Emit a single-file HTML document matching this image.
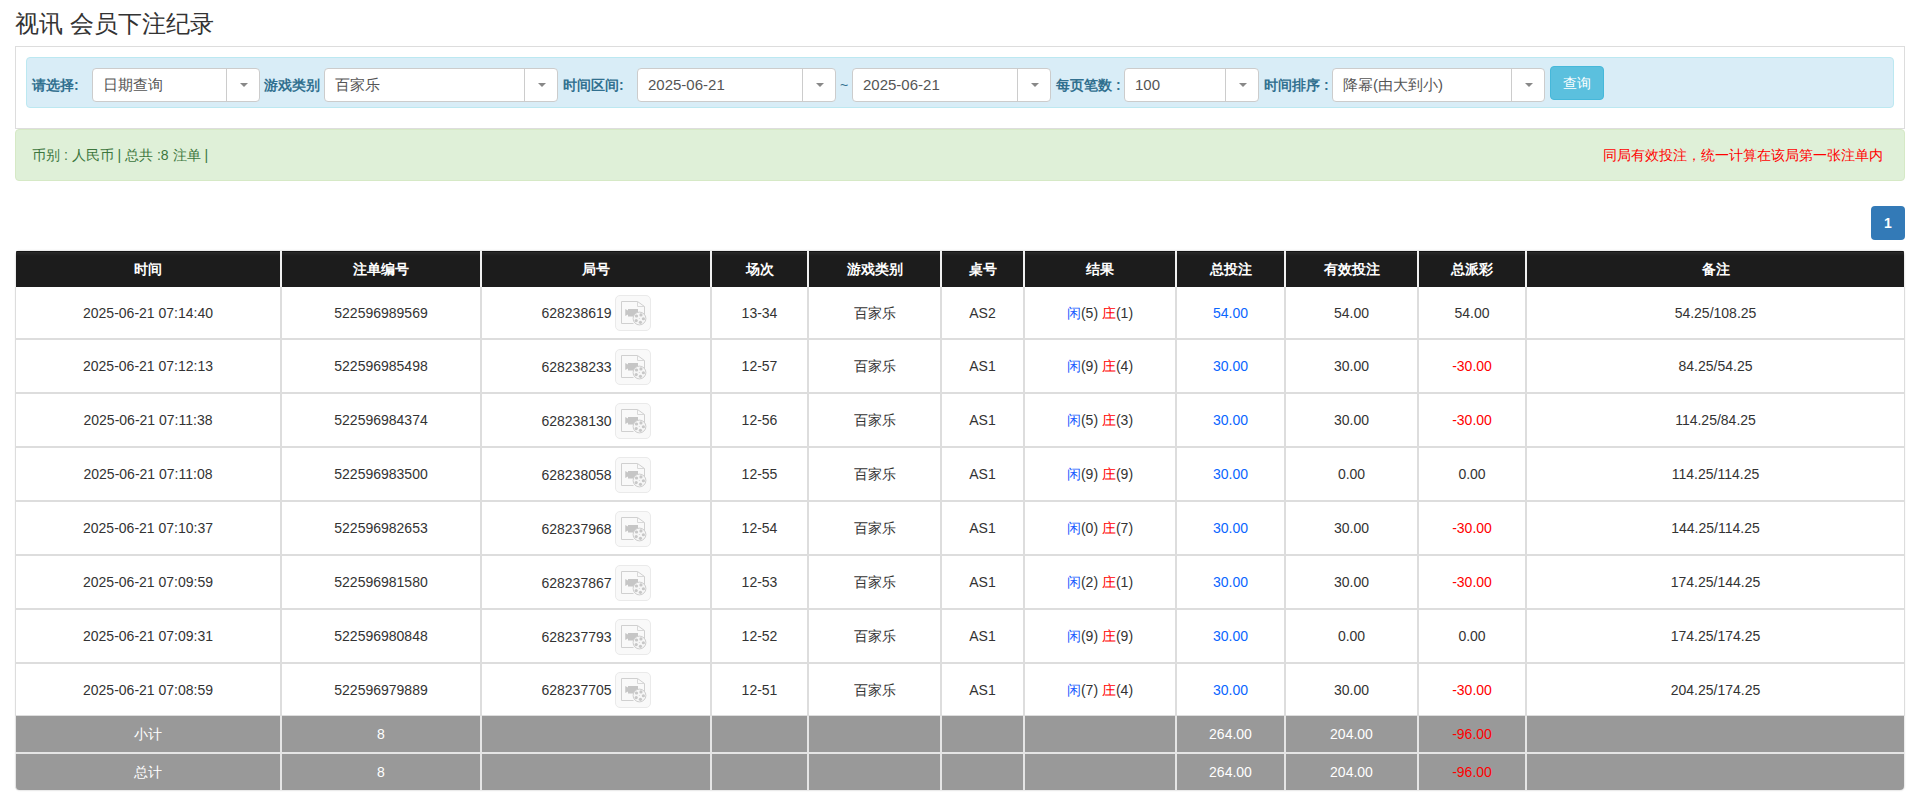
<!DOCTYPE html>
<html><head><meta charset="utf-8"><title>视讯 会员下注纪录</title>
<style>
*{box-sizing:border-box;margin:0;padding:0}
html,body{width:1915px;height:803px;overflow:hidden;background:#fff}
body{font-family:"Liberation Sans",sans-serif;font-size:14px;color:#333;position:relative}
.a{position:absolute}
.title{left:15px;top:7px;font-size:24px;line-height:34px;color:#333;white-space:nowrap}
.panel{left:15px;top:46px;width:1890px;height:83px;border:1px solid #ddd}
.bar{left:26px;top:57px;width:1868px;height:51px;background:#d9edf7;border:1px solid #bce8f1;border-radius:4px}
.lbl{position:absolute;top:76px;font-size:14px;font-weight:bold;color:#31708f;line-height:18px;white-space:nowrap}
.sel{position:absolute;top:68px;height:34px;background:#fff;border:1px solid #ccc;border-radius:4px}
.sel .tx{position:absolute;left:10px;top:0;line-height:32px;font-size:15px;color:#555;white-space:nowrap}
.sel .ar{position:absolute;right:0;top:0;width:33px;height:32px;border-left:1px solid #ccc}
.sel .ar:after{content:"";position:absolute;left:13px;top:14px;border-left:4px solid transparent;border-right:4px solid transparent;border-top:4px solid #888}
.btn{left:1550px;top:66px;width:54px;height:34px;background:#5bc0de;border:1px solid #46b8da;border-radius:4px;color:#fff;font-size:14px;line-height:32px;text-align:center}
.alert{left:15px;top:129px;width:1890px;height:52px;background:#dff0d8;border:1px solid #d6e9c6;border-radius:4px}
.al{position:absolute;left:16px;top:16px;color:#3c763d;font-size:14px;line-height:18px;white-space:nowrap}
.ar2{position:absolute;right:21px;top:16px;color:#f00;font-size:14px;line-height:18px;white-space:nowrap}
.pg{left:1871px;top:206px;width:34px;height:34px;background:#337ab7;border-radius:4px;color:#fff;font-size:14px;font-weight:bold;line-height:34px;text-align:center}
.c{position:absolute;display:flex;align-items:center;justify-content:center;white-space:nowrap;line-height:16px}
.h{background:linear-gradient(#141414 0,#141414 1px,#2a2a2a 1px,#222 3px,#1c1c1c 5px);color:#fff;font-weight:bold;border-left:1px solid #f0f0f0;border-right:1px solid #f0f0f0}
.b{background:#fff;border:1px solid #ddd}
.b.first{border-top:none}
.g{background:#999;color:#fff;border-left:1px solid #e5e5e5;border-right:1px solid #e5e5e5}
.bl{color:#1b5cff}
.rd{color:#f00}
.bn{color:#0a66ff}
.num{position:relative;top:2px}
.ic{display:inline-block;width:36px;height:36px;margin-left:3px;border:1px solid #eaeaea;border-radius:5px;background:#f9f9f9;vertical-align:middle;position:relative;top:0.5px}
.ic svg{position:absolute;left:-1px;top:-1px}
.sep{position:absolute;left:16px;top:752px;width:1888px;height:2px;background:#e5e5e5}
.tshadow{position:absolute;left:16px;top:251px;width:1888px;height:539px;border-radius:4px;box-shadow:0 0 2px rgba(0,0,0,.3)}
.shadow{position:absolute;left:16px;top:790px;width:1888px;height:2px;background:linear-gradient(#ccc,#fff)}
</style></head><body>
<div class="a title">视讯 会员下注纪录</div>
<div class="a panel"></div>
<div class="a bar"></div>
<div class="lbl" style="left:32px">请选择:</div>
<div class="sel" style="left:92px;width:168px"><span class="tx">日期查询</span><span class="ar"></span></div>
<div class="lbl" style="left:264px">游戏类别</div>
<div class="sel" style="left:324px;width:234px"><span class="tx">百家乐</span><span class="ar"></span></div>
<div class="lbl" style="left:563px">时间区间:</div>
<div class="sel" style="left:637px;width:199px"><span class="tx">2025-06-21</span><span class="ar"></span></div>
<div class="lbl" style="left:840px;font-weight:normal">~</div>
<div class="sel" style="left:852px;width:199px"><span class="tx">2025-06-21</span><span class="ar"></span></div>
<div class="lbl" style="left:1056px">每页笔数 :</div>
<div class="sel" style="left:1124px;width:135px"><span class="tx">100</span><span class="ar"></span></div>
<div class="lbl" style="left:1264px">时间排序 :</div>
<div class="sel" style="left:1332px;width:213px"><span class="tx">降幂(由大到小)</span><span class="ar"></span></div>
<div class="a btn">查询</div>
<div class="a alert"><span class="al">币别 : 人民币 | 总共 :8 注单 |</span><span class="ar2">同局有效投注，统一计算在该局第一张注单内</span></div>
<div class="a pg">1</div>
<div class="tshadow"></div>
<div class="c h" style="left:15px;top:251px;width:266px;height:36px;border-left:none;border-top-left-radius:1px;left:16px;width:265px;"><span class="in">时间</span></div>
<div class="c h" style="left:281px;top:251px;width:200px;height:36px;"><span class="in">注单编号</span></div>
<div class="c h" style="left:481px;top:251px;width:230px;height:36px;"><span class="in">局号</span></div>
<div class="c h" style="left:711px;top:251px;width:97px;height:36px;"><span class="in">场次</span></div>
<div class="c h" style="left:808px;top:251px;width:133px;height:36px;"><span class="in">游戏类别</span></div>
<div class="c h" style="left:941px;top:251px;width:83px;height:36px;"><span class="in">桌号</span></div>
<div class="c h" style="left:1024px;top:251px;width:152px;height:36px;"><span class="in">结果</span></div>
<div class="c h" style="left:1176px;top:251px;width:109px;height:36px;"><span class="in">总投注</span></div>
<div class="c h" style="left:1285px;top:251px;width:133px;height:36px;"><span class="in">有效投注</span></div>
<div class="c h" style="left:1418px;top:251px;width:108px;height:36px;"><span class="in">总派彩</span></div>
<div class="c h" style="left:1526px;top:251px;width:379px;height:36px;border-right:none;border-top-right-radius:1px;width:378px;"><span class="in">备注</span></div>
<div class="c b first" style="left:15px;top:287px;width:266px;height:52px;"><span class="in">2025-06-21 07:14:40</span></div>
<div class="c b first" style="left:281px;top:287px;width:200px;height:52px;"><span class="in">522596989569</span></div>
<div class="c b first" style="left:481px;top:287px;width:230px;height:52px;"><span class="in"><span class="num">628238619</span><span class="ic"><svg width="35" height="36" viewBox="0 0 35 36"><path d="M6.5 6.5h16l7 5v11.5M6.5 6.5v22h12" fill="none" stroke="#d0d0d0" stroke-width="1"/><path d="M22.5 6.5v5h7" fill="none" stroke="#d8d8d8" stroke-width="1"/><path d="M10.25 14L13 15.5V14H23V21.5H13V19.5L10.25 21Z" fill="#c6c6c6"/><circle cx="24.5" cy="23.5" r="6.4" fill="#f6f6f6" stroke="#cfcfcf" stroke-width="1"/><circle cx="28.39" cy="23.77" r="1.6" fill="#c8c8c8"/><circle cx="25.44" cy="27.28" r="1.6" fill="#c8c8c8"/><circle cx="21.19" cy="25.57" r="1.6" fill="#c8c8c8"/><circle cx="21.51" cy="20.99" r="1.6" fill="#c8c8c8"/><circle cx="25.96" cy="19.88" r="1.6" fill="#c8c8c8"/><circle cx="24.3" cy="23.5" r="0.5" fill="#d0d0d0"/></svg></span></span></div>
<div class="c b first" style="left:711px;top:287px;width:97px;height:52px;"><span class="in">13-34</span></div>
<div class="c b first" style="left:808px;top:287px;width:133px;height:52px;"><span class="in">百家乐</span></div>
<div class="c b first" style="left:941px;top:287px;width:83px;height:52px;"><span class="in">AS2</span></div>
<div class="c b first" style="left:1024px;top:287px;width:152px;height:52px;"><span class="in"><span class="bl">闲</span>(5) <span class="rd">庄</span>(1)</span></div>
<div class="c b first" style="left:1176px;top:287px;width:109px;height:52px;"><span class="in"><span class="bn">54.00</span></span></div>
<div class="c b first" style="left:1285px;top:287px;width:133px;height:52px;"><span class="in">54.00</span></div>
<div class="c b first" style="left:1418px;top:287px;width:108px;height:52px;"><span class="in">54.00</span></div>
<div class="c b first" style="left:1526px;top:287px;width:379px;height:52px;"><span class="in">54.25/108.25</span></div>
<div class="c b" style="left:15px;top:339px;width:266px;height:54px;"><span class="in">2025-06-21 07:12:13</span></div>
<div class="c b" style="left:281px;top:339px;width:200px;height:54px;"><span class="in">522596985498</span></div>
<div class="c b" style="left:481px;top:339px;width:230px;height:54px;"><span class="in"><span class="num">628238233</span><span class="ic"><svg width="35" height="36" viewBox="0 0 35 36"><path d="M6.5 6.5h16l7 5v11.5M6.5 6.5v22h12" fill="none" stroke="#d0d0d0" stroke-width="1"/><path d="M22.5 6.5v5h7" fill="none" stroke="#d8d8d8" stroke-width="1"/><path d="M10.25 14L13 15.5V14H23V21.5H13V19.5L10.25 21Z" fill="#c6c6c6"/><circle cx="24.5" cy="23.5" r="6.4" fill="#f6f6f6" stroke="#cfcfcf" stroke-width="1"/><circle cx="28.39" cy="23.77" r="1.6" fill="#c8c8c8"/><circle cx="25.44" cy="27.28" r="1.6" fill="#c8c8c8"/><circle cx="21.19" cy="25.57" r="1.6" fill="#c8c8c8"/><circle cx="21.51" cy="20.99" r="1.6" fill="#c8c8c8"/><circle cx="25.96" cy="19.88" r="1.6" fill="#c8c8c8"/><circle cx="24.3" cy="23.5" r="0.5" fill="#d0d0d0"/></svg></span></span></div>
<div class="c b" style="left:711px;top:339px;width:97px;height:54px;"><span class="in">12-57</span></div>
<div class="c b" style="left:808px;top:339px;width:133px;height:54px;"><span class="in">百家乐</span></div>
<div class="c b" style="left:941px;top:339px;width:83px;height:54px;"><span class="in">AS1</span></div>
<div class="c b" style="left:1024px;top:339px;width:152px;height:54px;"><span class="in"><span class="bl">闲</span>(9) <span class="rd">庄</span>(4)</span></div>
<div class="c b" style="left:1176px;top:339px;width:109px;height:54px;"><span class="in"><span class="bn">30.00</span></span></div>
<div class="c b" style="left:1285px;top:339px;width:133px;height:54px;"><span class="in">30.00</span></div>
<div class="c b" style="left:1418px;top:339px;width:108px;height:54px;"><span class="in"><span class="rd">-30.00</span></span></div>
<div class="c b" style="left:1526px;top:339px;width:379px;height:54px;"><span class="in">84.25/54.25</span></div>
<div class="c b" style="left:15px;top:393px;width:266px;height:54px;"><span class="in">2025-06-21 07:11:38</span></div>
<div class="c b" style="left:281px;top:393px;width:200px;height:54px;"><span class="in">522596984374</span></div>
<div class="c b" style="left:481px;top:393px;width:230px;height:54px;"><span class="in"><span class="num">628238130</span><span class="ic"><svg width="35" height="36" viewBox="0 0 35 36"><path d="M6.5 6.5h16l7 5v11.5M6.5 6.5v22h12" fill="none" stroke="#d0d0d0" stroke-width="1"/><path d="M22.5 6.5v5h7" fill="none" stroke="#d8d8d8" stroke-width="1"/><path d="M10.25 14L13 15.5V14H23V21.5H13V19.5L10.25 21Z" fill="#c6c6c6"/><circle cx="24.5" cy="23.5" r="6.4" fill="#f6f6f6" stroke="#cfcfcf" stroke-width="1"/><circle cx="28.39" cy="23.77" r="1.6" fill="#c8c8c8"/><circle cx="25.44" cy="27.28" r="1.6" fill="#c8c8c8"/><circle cx="21.19" cy="25.57" r="1.6" fill="#c8c8c8"/><circle cx="21.51" cy="20.99" r="1.6" fill="#c8c8c8"/><circle cx="25.96" cy="19.88" r="1.6" fill="#c8c8c8"/><circle cx="24.3" cy="23.5" r="0.5" fill="#d0d0d0"/></svg></span></span></div>
<div class="c b" style="left:711px;top:393px;width:97px;height:54px;"><span class="in">12-56</span></div>
<div class="c b" style="left:808px;top:393px;width:133px;height:54px;"><span class="in">百家乐</span></div>
<div class="c b" style="left:941px;top:393px;width:83px;height:54px;"><span class="in">AS1</span></div>
<div class="c b" style="left:1024px;top:393px;width:152px;height:54px;"><span class="in"><span class="bl">闲</span>(5) <span class="rd">庄</span>(3)</span></div>
<div class="c b" style="left:1176px;top:393px;width:109px;height:54px;"><span class="in"><span class="bn">30.00</span></span></div>
<div class="c b" style="left:1285px;top:393px;width:133px;height:54px;"><span class="in">30.00</span></div>
<div class="c b" style="left:1418px;top:393px;width:108px;height:54px;"><span class="in"><span class="rd">-30.00</span></span></div>
<div class="c b" style="left:1526px;top:393px;width:379px;height:54px;"><span class="in">114.25/84.25</span></div>
<div class="c b" style="left:15px;top:447px;width:266px;height:54px;"><span class="in">2025-06-21 07:11:08</span></div>
<div class="c b" style="left:281px;top:447px;width:200px;height:54px;"><span class="in">522596983500</span></div>
<div class="c b" style="left:481px;top:447px;width:230px;height:54px;"><span class="in"><span class="num">628238058</span><span class="ic"><svg width="35" height="36" viewBox="0 0 35 36"><path d="M6.5 6.5h16l7 5v11.5M6.5 6.5v22h12" fill="none" stroke="#d0d0d0" stroke-width="1"/><path d="M22.5 6.5v5h7" fill="none" stroke="#d8d8d8" stroke-width="1"/><path d="M10.25 14L13 15.5V14H23V21.5H13V19.5L10.25 21Z" fill="#c6c6c6"/><circle cx="24.5" cy="23.5" r="6.4" fill="#f6f6f6" stroke="#cfcfcf" stroke-width="1"/><circle cx="28.39" cy="23.77" r="1.6" fill="#c8c8c8"/><circle cx="25.44" cy="27.28" r="1.6" fill="#c8c8c8"/><circle cx="21.19" cy="25.57" r="1.6" fill="#c8c8c8"/><circle cx="21.51" cy="20.99" r="1.6" fill="#c8c8c8"/><circle cx="25.96" cy="19.88" r="1.6" fill="#c8c8c8"/><circle cx="24.3" cy="23.5" r="0.5" fill="#d0d0d0"/></svg></span></span></div>
<div class="c b" style="left:711px;top:447px;width:97px;height:54px;"><span class="in">12-55</span></div>
<div class="c b" style="left:808px;top:447px;width:133px;height:54px;"><span class="in">百家乐</span></div>
<div class="c b" style="left:941px;top:447px;width:83px;height:54px;"><span class="in">AS1</span></div>
<div class="c b" style="left:1024px;top:447px;width:152px;height:54px;"><span class="in"><span class="bl">闲</span>(9) <span class="rd">庄</span>(9)</span></div>
<div class="c b" style="left:1176px;top:447px;width:109px;height:54px;"><span class="in"><span class="bn">30.00</span></span></div>
<div class="c b" style="left:1285px;top:447px;width:133px;height:54px;"><span class="in">0.00</span></div>
<div class="c b" style="left:1418px;top:447px;width:108px;height:54px;"><span class="in">0.00</span></div>
<div class="c b" style="left:1526px;top:447px;width:379px;height:54px;"><span class="in">114.25/114.25</span></div>
<div class="c b" style="left:15px;top:501px;width:266px;height:54px;"><span class="in">2025-06-21 07:10:37</span></div>
<div class="c b" style="left:281px;top:501px;width:200px;height:54px;"><span class="in">522596982653</span></div>
<div class="c b" style="left:481px;top:501px;width:230px;height:54px;"><span class="in"><span class="num">628237968</span><span class="ic"><svg width="35" height="36" viewBox="0 0 35 36"><path d="M6.5 6.5h16l7 5v11.5M6.5 6.5v22h12" fill="none" stroke="#d0d0d0" stroke-width="1"/><path d="M22.5 6.5v5h7" fill="none" stroke="#d8d8d8" stroke-width="1"/><path d="M10.25 14L13 15.5V14H23V21.5H13V19.5L10.25 21Z" fill="#c6c6c6"/><circle cx="24.5" cy="23.5" r="6.4" fill="#f6f6f6" stroke="#cfcfcf" stroke-width="1"/><circle cx="28.39" cy="23.77" r="1.6" fill="#c8c8c8"/><circle cx="25.44" cy="27.28" r="1.6" fill="#c8c8c8"/><circle cx="21.19" cy="25.57" r="1.6" fill="#c8c8c8"/><circle cx="21.51" cy="20.99" r="1.6" fill="#c8c8c8"/><circle cx="25.96" cy="19.88" r="1.6" fill="#c8c8c8"/><circle cx="24.3" cy="23.5" r="0.5" fill="#d0d0d0"/></svg></span></span></div>
<div class="c b" style="left:711px;top:501px;width:97px;height:54px;"><span class="in">12-54</span></div>
<div class="c b" style="left:808px;top:501px;width:133px;height:54px;"><span class="in">百家乐</span></div>
<div class="c b" style="left:941px;top:501px;width:83px;height:54px;"><span class="in">AS1</span></div>
<div class="c b" style="left:1024px;top:501px;width:152px;height:54px;"><span class="in"><span class="bl">闲</span>(0) <span class="rd">庄</span>(7)</span></div>
<div class="c b" style="left:1176px;top:501px;width:109px;height:54px;"><span class="in"><span class="bn">30.00</span></span></div>
<div class="c b" style="left:1285px;top:501px;width:133px;height:54px;"><span class="in">30.00</span></div>
<div class="c b" style="left:1418px;top:501px;width:108px;height:54px;"><span class="in"><span class="rd">-30.00</span></span></div>
<div class="c b" style="left:1526px;top:501px;width:379px;height:54px;"><span class="in">144.25/114.25</span></div>
<div class="c b" style="left:15px;top:555px;width:266px;height:54px;"><span class="in">2025-06-21 07:09:59</span></div>
<div class="c b" style="left:281px;top:555px;width:200px;height:54px;"><span class="in">522596981580</span></div>
<div class="c b" style="left:481px;top:555px;width:230px;height:54px;"><span class="in"><span class="num">628237867</span><span class="ic"><svg width="35" height="36" viewBox="0 0 35 36"><path d="M6.5 6.5h16l7 5v11.5M6.5 6.5v22h12" fill="none" stroke="#d0d0d0" stroke-width="1"/><path d="M22.5 6.5v5h7" fill="none" stroke="#d8d8d8" stroke-width="1"/><path d="M10.25 14L13 15.5V14H23V21.5H13V19.5L10.25 21Z" fill="#c6c6c6"/><circle cx="24.5" cy="23.5" r="6.4" fill="#f6f6f6" stroke="#cfcfcf" stroke-width="1"/><circle cx="28.39" cy="23.77" r="1.6" fill="#c8c8c8"/><circle cx="25.44" cy="27.28" r="1.6" fill="#c8c8c8"/><circle cx="21.19" cy="25.57" r="1.6" fill="#c8c8c8"/><circle cx="21.51" cy="20.99" r="1.6" fill="#c8c8c8"/><circle cx="25.96" cy="19.88" r="1.6" fill="#c8c8c8"/><circle cx="24.3" cy="23.5" r="0.5" fill="#d0d0d0"/></svg></span></span></div>
<div class="c b" style="left:711px;top:555px;width:97px;height:54px;"><span class="in">12-53</span></div>
<div class="c b" style="left:808px;top:555px;width:133px;height:54px;"><span class="in">百家乐</span></div>
<div class="c b" style="left:941px;top:555px;width:83px;height:54px;"><span class="in">AS1</span></div>
<div class="c b" style="left:1024px;top:555px;width:152px;height:54px;"><span class="in"><span class="bl">闲</span>(2) <span class="rd">庄</span>(1)</span></div>
<div class="c b" style="left:1176px;top:555px;width:109px;height:54px;"><span class="in"><span class="bn">30.00</span></span></div>
<div class="c b" style="left:1285px;top:555px;width:133px;height:54px;"><span class="in">30.00</span></div>
<div class="c b" style="left:1418px;top:555px;width:108px;height:54px;"><span class="in"><span class="rd">-30.00</span></span></div>
<div class="c b" style="left:1526px;top:555px;width:379px;height:54px;"><span class="in">174.25/144.25</span></div>
<div class="c b" style="left:15px;top:609px;width:266px;height:54px;"><span class="in">2025-06-21 07:09:31</span></div>
<div class="c b" style="left:281px;top:609px;width:200px;height:54px;"><span class="in">522596980848</span></div>
<div class="c b" style="left:481px;top:609px;width:230px;height:54px;"><span class="in"><span class="num">628237793</span><span class="ic"><svg width="35" height="36" viewBox="0 0 35 36"><path d="M6.5 6.5h16l7 5v11.5M6.5 6.5v22h12" fill="none" stroke="#d0d0d0" stroke-width="1"/><path d="M22.5 6.5v5h7" fill="none" stroke="#d8d8d8" stroke-width="1"/><path d="M10.25 14L13 15.5V14H23V21.5H13V19.5L10.25 21Z" fill="#c6c6c6"/><circle cx="24.5" cy="23.5" r="6.4" fill="#f6f6f6" stroke="#cfcfcf" stroke-width="1"/><circle cx="28.39" cy="23.77" r="1.6" fill="#c8c8c8"/><circle cx="25.44" cy="27.28" r="1.6" fill="#c8c8c8"/><circle cx="21.19" cy="25.57" r="1.6" fill="#c8c8c8"/><circle cx="21.51" cy="20.99" r="1.6" fill="#c8c8c8"/><circle cx="25.96" cy="19.88" r="1.6" fill="#c8c8c8"/><circle cx="24.3" cy="23.5" r="0.5" fill="#d0d0d0"/></svg></span></span></div>
<div class="c b" style="left:711px;top:609px;width:97px;height:54px;"><span class="in">12-52</span></div>
<div class="c b" style="left:808px;top:609px;width:133px;height:54px;"><span class="in">百家乐</span></div>
<div class="c b" style="left:941px;top:609px;width:83px;height:54px;"><span class="in">AS1</span></div>
<div class="c b" style="left:1024px;top:609px;width:152px;height:54px;"><span class="in"><span class="bl">闲</span>(9) <span class="rd">庄</span>(9)</span></div>
<div class="c b" style="left:1176px;top:609px;width:109px;height:54px;"><span class="in"><span class="bn">30.00</span></span></div>
<div class="c b" style="left:1285px;top:609px;width:133px;height:54px;"><span class="in">0.00</span></div>
<div class="c b" style="left:1418px;top:609px;width:108px;height:54px;"><span class="in">0.00</span></div>
<div class="c b" style="left:1526px;top:609px;width:379px;height:54px;"><span class="in">174.25/174.25</span></div>
<div class="c b" style="left:15px;top:663px;width:266px;height:53px;"><span class="in">2025-06-21 07:08:59</span></div>
<div class="c b" style="left:281px;top:663px;width:200px;height:53px;"><span class="in">522596979889</span></div>
<div class="c b" style="left:481px;top:663px;width:230px;height:53px;"><span class="in"><span class="num">628237705</span><span class="ic"><svg width="35" height="36" viewBox="0 0 35 36"><path d="M6.5 6.5h16l7 5v11.5M6.5 6.5v22h12" fill="none" stroke="#d0d0d0" stroke-width="1"/><path d="M22.5 6.5v5h7" fill="none" stroke="#d8d8d8" stroke-width="1"/><path d="M10.25 14L13 15.5V14H23V21.5H13V19.5L10.25 21Z" fill="#c6c6c6"/><circle cx="24.5" cy="23.5" r="6.4" fill="#f6f6f6" stroke="#cfcfcf" stroke-width="1"/><circle cx="28.39" cy="23.77" r="1.6" fill="#c8c8c8"/><circle cx="25.44" cy="27.28" r="1.6" fill="#c8c8c8"/><circle cx="21.19" cy="25.57" r="1.6" fill="#c8c8c8"/><circle cx="21.51" cy="20.99" r="1.6" fill="#c8c8c8"/><circle cx="25.96" cy="19.88" r="1.6" fill="#c8c8c8"/><circle cx="24.3" cy="23.5" r="0.5" fill="#d0d0d0"/></svg></span></span></div>
<div class="c b" style="left:711px;top:663px;width:97px;height:53px;"><span class="in">12-51</span></div>
<div class="c b" style="left:808px;top:663px;width:133px;height:53px;"><span class="in">百家乐</span></div>
<div class="c b" style="left:941px;top:663px;width:83px;height:53px;"><span class="in">AS1</span></div>
<div class="c b" style="left:1024px;top:663px;width:152px;height:53px;"><span class="in"><span class="bl">闲</span>(7) <span class="rd">庄</span>(4)</span></div>
<div class="c b" style="left:1176px;top:663px;width:109px;height:53px;"><span class="in"><span class="bn">30.00</span></span></div>
<div class="c b" style="left:1285px;top:663px;width:133px;height:53px;"><span class="in">30.00</span></div>
<div class="c b" style="left:1418px;top:663px;width:108px;height:53px;"><span class="in"><span class="rd">-30.00</span></span></div>
<div class="c b" style="left:1526px;top:663px;width:379px;height:53px;"><span class="in">204.25/174.25</span></div>
<div class="c g" style="left:15px;top:716px;width:266px;height:36px;"><span class="in">小计</span></div>
<div class="c g" style="left:281px;top:716px;width:200px;height:36px;"><span class="in">8</span></div>
<div class="c g" style="left:481px;top:716px;width:230px;height:36px;"><span class="in"></span></div>
<div class="c g" style="left:711px;top:716px;width:97px;height:36px;"><span class="in"></span></div>
<div class="c g" style="left:808px;top:716px;width:133px;height:36px;"><span class="in"></span></div>
<div class="c g" style="left:941px;top:716px;width:83px;height:36px;"><span class="in"></span></div>
<div class="c g" style="left:1024px;top:716px;width:152px;height:36px;"><span class="in"></span></div>
<div class="c g" style="left:1176px;top:716px;width:109px;height:36px;"><span class="in">264.00</span></div>
<div class="c g" style="left:1285px;top:716px;width:133px;height:36px;"><span class="in">204.00</span></div>
<div class="c g" style="left:1418px;top:716px;width:108px;height:36px;"><span class="in"><span class="rd">-96.00</span></span></div>
<div class="c g" style="left:1526px;top:716px;width:379px;height:36px;width:378px;border-right:none;"><span class="in"></span></div>
<div class="c g" style="left:15px;top:754px;width:266px;height:36px;border-bottom-left-radius:4px;"><span class="in">总计</span></div>
<div class="c g" style="left:281px;top:754px;width:200px;height:36px;"><span class="in">8</span></div>
<div class="c g" style="left:481px;top:754px;width:230px;height:36px;"><span class="in"></span></div>
<div class="c g" style="left:711px;top:754px;width:97px;height:36px;"><span class="in"></span></div>
<div class="c g" style="left:808px;top:754px;width:133px;height:36px;"><span class="in"></span></div>
<div class="c g" style="left:941px;top:754px;width:83px;height:36px;"><span class="in"></span></div>
<div class="c g" style="left:1024px;top:754px;width:152px;height:36px;"><span class="in"></span></div>
<div class="c g" style="left:1176px;top:754px;width:109px;height:36px;"><span class="in">264.00</span></div>
<div class="c g" style="left:1285px;top:754px;width:133px;height:36px;"><span class="in">204.00</span></div>
<div class="c g" style="left:1418px;top:754px;width:108px;height:36px;"><span class="in"><span class="rd">-96.00</span></span></div>
<div class="c g" style="left:1526px;top:754px;width:379px;height:36px;width:378px;border-right:none;border-bottom-right-radius:4px;"><span class="in"></span></div>

<div class="sep"></div>
</body></html>
